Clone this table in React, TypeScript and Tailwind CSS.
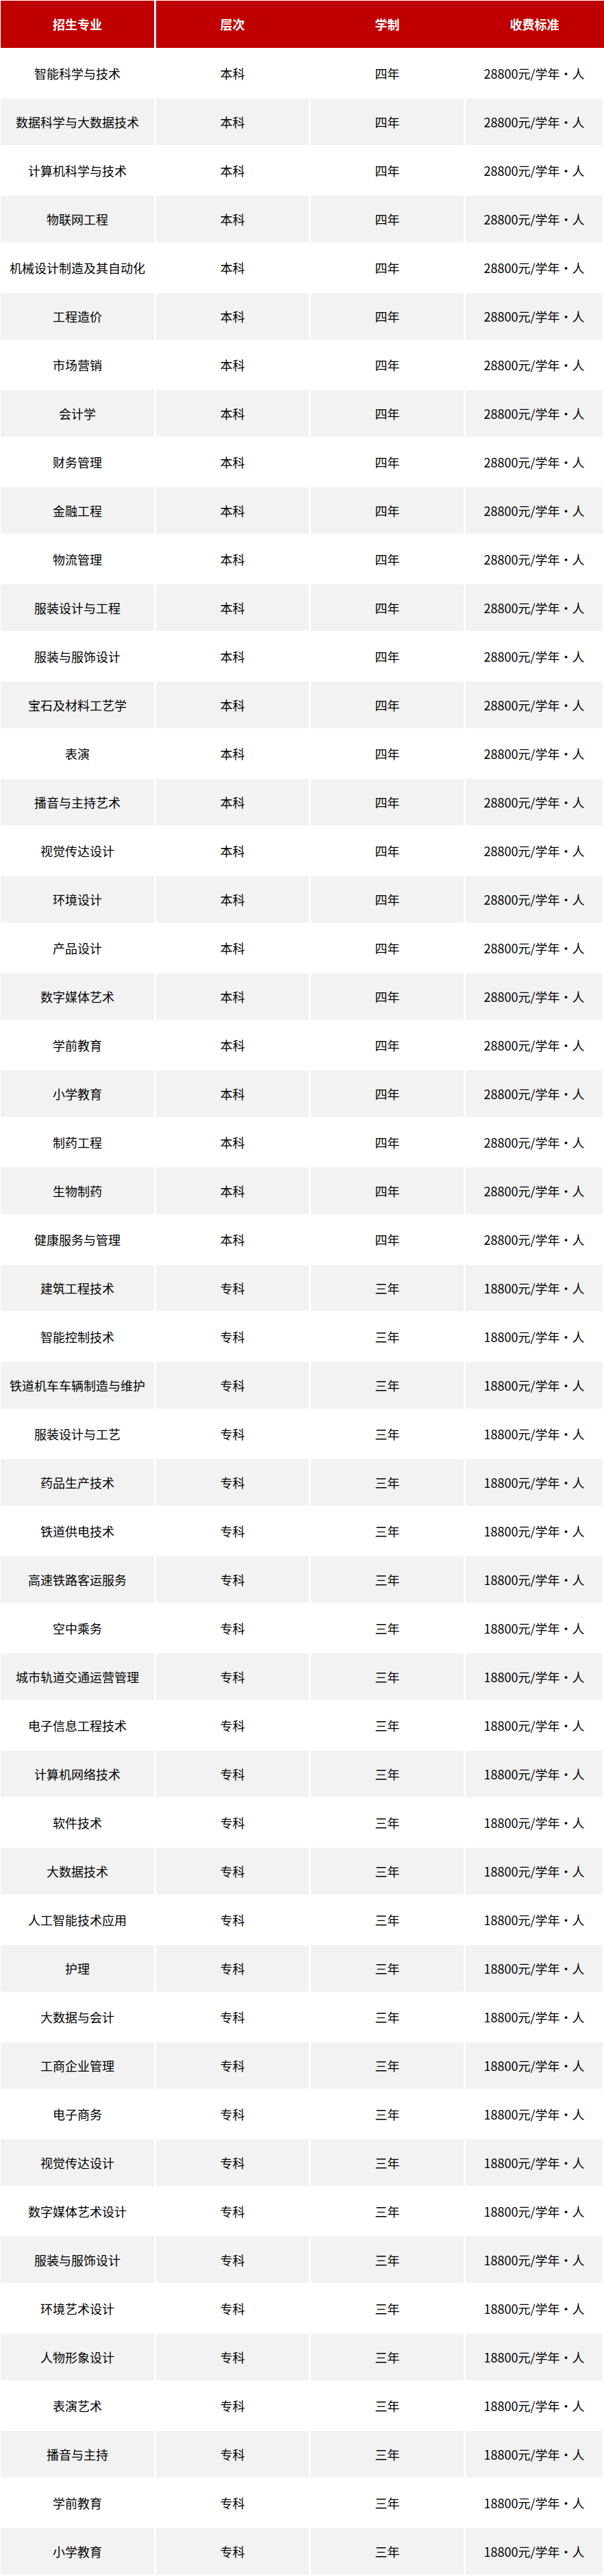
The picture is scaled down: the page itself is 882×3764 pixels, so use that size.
import React from 'react';

type Row = { name: string; level: string; years: string; fee: string };

const bachelor = [
  '智能科学与技术',
  '数据科学与大数据技术',
  '计算机科学与技术',
  '物联网工程',
  '机械设计制造及其自动化',
  '工程造价',
  '市场营销',
  '会计学',
  '财务管理',
  '金融工程',
  '物流管理',
  '服装设计与工程',
  '服装与服饰设计',
  '宝石及材料工艺学',
  '表演',
  '播音与主持艺术',
  '视觉传达设计',
  '环境设计',
  '产品设计',
  '数字媒体艺术',
  '学前教育',
  '小学教育',
  '制药工程',
  '生物制药',
  '健康服务与管理',
];

const college = [
  '建筑工程技术',
  '智能控制技术',
  '铁道机车车辆制造与维护',
  '服装设计与工艺',
  '药品生产技术',
  '铁道供电技术',
  '高速铁路客运服务',
  '空中乘务',
  '城市轨道交通运营管理',
  '电子信息工程技术',
  '计算机网络技术',
  '软件技术',
  '大数据技术',
  '人工智能技术应用',
  '护理',
  '大数据与会计',
  '工商企业管理',
  '电子商务',
  '视觉传达设计',
  '数字媒体艺术设计',
  '服装与服饰设计',
  '环境艺术设计',
  '人物形象设计',
  '表演艺术',
  '播音与主持',
  '学前教育',
  '小学教育',
];

const rows: Row[] = [
  ...bachelor.map((name) => ({ name, level: '本科', years: '四年', fee: '28800元/学年·人' })),
  ...college.map((name) => ({ name, level: '专科', years: '三年', fee: '18800元/学年·人' })),
];

const font = { fontFamily: '"Noto Sans CJK SC", "Noto Sans", sans-serif' };

const App: React.FC = () => {
  return (
    <div className="w-[882px] bg-white pt-[1px] pl-[1px] text-[18px] text-black" style={font}>
      {/* header: first cell separate, the other three run together */}
      <div className="grid grid-cols-[224px_224px_223px_201px] gap-x-[3px] h-[69px]">
        <div className="bg-[#c00000] flex items-center justify-center font-bold text-white">招生专业</div>
        <div className="col-span-3 bg-[#c00000] grid grid-cols-[223px_223px_201px] gap-x-[3px] font-bold text-white">
          <div className="flex items-center justify-center">层次</div>
          <div className="flex items-center justify-center">学制</div>
          <div className="flex items-center justify-center">收费标准</div>
        </div>
      </div>

      {rows.map((r, i) => {
        const bg = i % 2 === 1 ? 'bg-[#f2f2f2]' : 'bg-white';
        return (
          <div key={i} className="grid grid-cols-[224px_223px_223px_200px] gap-x-[3px] mt-[3px] h-[68px]">
            <div className={`${bg} flex items-center justify-center whitespace-nowrap`}>{r.name}</div>
            <div className={`${bg} flex items-center justify-center`}>{r.level}</div>
            <div className={`${bg} flex items-center justify-center`}>{r.years}</div>
            <div className={`${bg} flex items-center justify-center whitespace-nowrap`}>{r.fee}</div>
          </div>
        );
      })}
    </div>
  );
};

export default App;
